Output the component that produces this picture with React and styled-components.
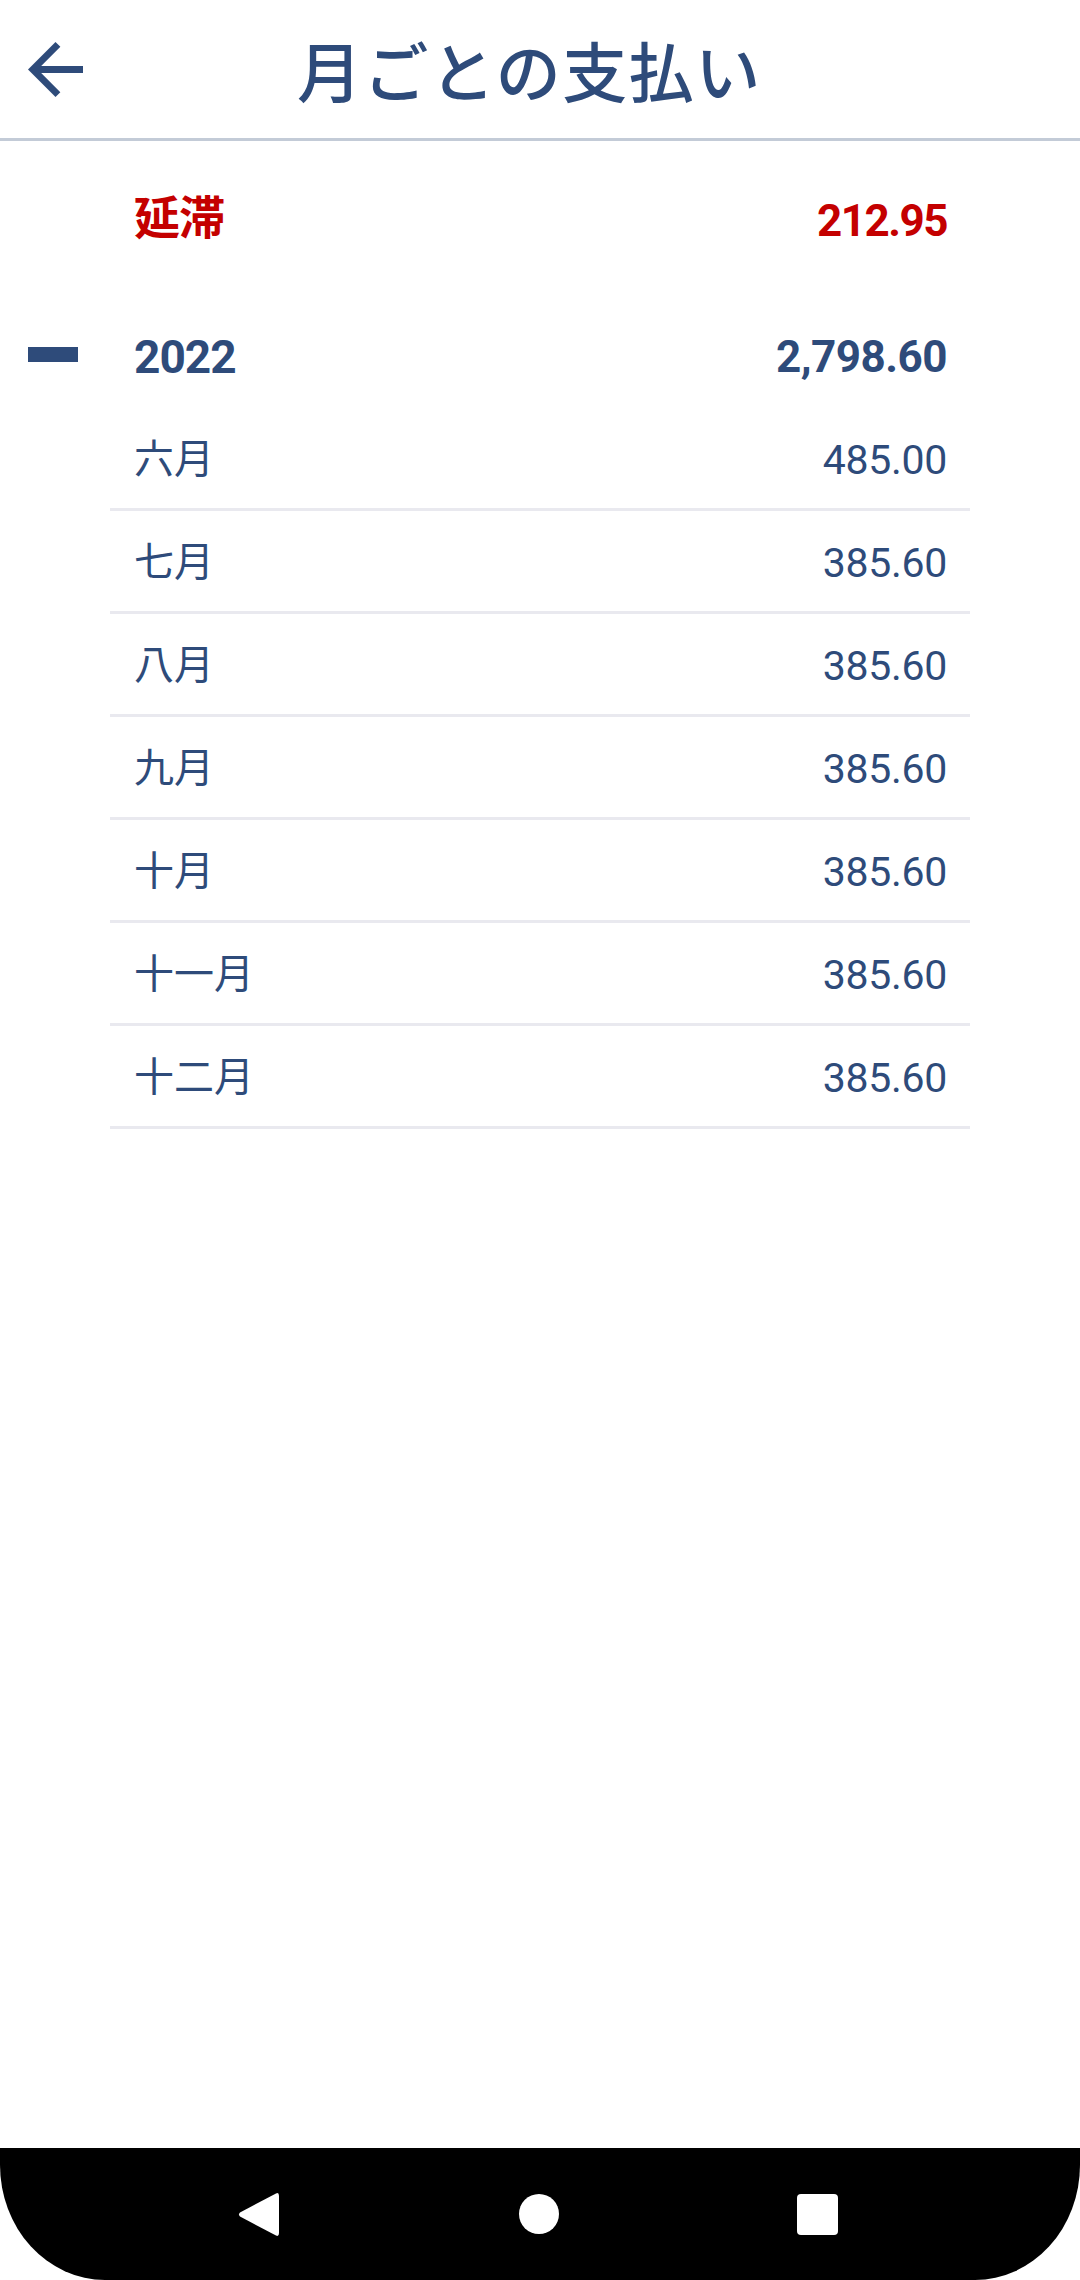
import React from 'react';
import styled, { createGlobalStyle } from 'styled-components';

const Colors = {
  Navy: '#2e4b7a',
  Red: '#c40000',
  HeaderLine: '#c3cbd7',
  RowLine: '#e9e9ef',
};

const payments = [
  { month: '六月', amount: '485.00' },
  { month: '七月', amount: '385.60' },
  { month: '八月', amount: '385.60' },
  { month: '九月', amount: '385.60' },
  { month: '十月', amount: '385.60' },
  { month: '十一月', amount: '385.60' },
  { month: '十二月', amount: '385.60' },
];

const GlobalStyle = createGlobalStyle`
  html, body {
    margin: 0;
    padding: 0;
    background: #fff;
  }
  body {
    font-family: Roboto, "Noto Sans CJK JP", sans-serif;
  }
`;

const BackIcon = () => (
  <svg width="55" height="55" viewBox="4 4 16 16" fill={Colors.Navy}>
    <path d="M20 11H7.83l5.59-5.59L12 4l-8 8 8 8 1.41-1.41L7.83 13H20v-2z" />
  </svg>
);

const App = () => (
  <Page>
    <GlobalStyle />
    <Header>
      <BackButton>
        <BackIcon />
      </BackButton>
      <Title>月ごとの支払い</Title>
    </Header>
    <Content>
      <OverdueRow>
        <Label bold red>延滞</Label>
        <Amount bold red>212.95</Amount>
      </OverdueRow>
      <YearRow>
        <Collapse />
        <Label bold>2022</Label>
        <Amount bold>2,798.60</Amount>
      </YearRow>
      <MonthList>
        {payments.map((p) => (
          <MonthRow key={p.month}>
            <Label>{p.month}</Label>
            <Amount>{p.amount}</Amount>
          </MonthRow>
        ))}
      </MonthList>
    </Content>
    <NavBar>
      <NavBack viewBox="0 0 41 45">
        <path d="M38 1.5 Q41 0 41 4 L41 41 Q41 45 38 43.5 L2 24.5 Q0 22.5 2 20.5 Z" fill="#fff" />
      </NavBack>
      <NavHome />
      <NavRecent />
    </NavBar>
  </Page>
);

const Page = styled.div`
  display: flex;
  flex-direction: column;
  min-height: 2280px;
  width: 1080px;
`;

const Header = styled.header`
  display: flex;
  align-items: center;
  height: 138px;
  border-bottom: 3px solid ${Colors.HeaderLine};
`;

const BackButton = styled.div`
  display: flex;
  align-items: center;
  padding-left: 28px;
  width: 55px;
  height: 55px;
`;

const Title = styled.h1`
  margin: 0 0 0 214px;
  font-family: "Noto Sans CJK JP", sans-serif;
  font-size: 65px;
  font-weight: 500;
  color: ${Colors.Navy};
  letter-spacing: 1.5px;
  line-height: 1;
`;

const Content = styled.main`
  flex: 1;
  display: flex;
  flex-direction: column;
  padding-top: 28px;
`;

const Row = styled.div`
  position: relative;
  display: flex;
  align-items: center;
  justify-content: space-between;
  margin: 0 110px;
  padding: 0 23px 0 24px;
  height: 103px;
  box-sizing: border-box;
`;

const OverdueRow = styled(Row)`
  margin-bottom: 33px;
`;

const YearRow = styled(Row)``;

const Collapse = styled.span`
  position: absolute;
  left: -82px;
  top: 42px;
  width: 50px;
  height: 15px;
  background: ${Colors.Navy};
`;

const MonthList = styled.div`
  display: flex;
  flex-direction: column;
`;

const MonthRow = styled(Row)`
  border-bottom: 3px solid ${Colors.RowLine};
`;

const Label = styled.span`
  font-family: Roboto, "Noto Sans CJK JP", sans-serif;
  font-size: ${(p) => (p.bold ? '46px' : '40px')};
  font-weight: ${(p) => (p.bold ? 700 : 400)};
  letter-spacing: ${(p) => (p.bold ? '-1px' : '0')};
  color: ${(p) => (p.red ? Colors.Red : Colors.Navy)};
  line-height: 1;
  margin-top: ${(p) => (p.red ? '-6px' : p.bold ? '0' : '4px')};
`;

const Amount = styled.span`
  font-family: Roboto, sans-serif;
  font-size: ${(p) => (p.bold ? '44px' : '41px')};
  font-weight: ${(p) => (p.bold ? 700 : 400)};
  letter-spacing: ${(p) => (p.bold ? (p.red ? '-1.5px' : '-0.5px') : '-0.3px')};
  color: ${(p) => (p.red ? Colors.Red : Colors.Navy)};
  line-height: 1;
  margin-top: ${(p) => (p.bold ? '0' : '5px')};
`;

const NavBar = styled.nav`
  display: flex;
  align-items: center;
  height: 132px;
  background: #000;
  border-radius: 0 0 105px 105px / 0 0 115px 115px;
  position: relative;
`;

const NavBack = styled.svg`
  position: absolute;
  left: 238px;
  top: 44px;
  width: 41px;
  height: 45px;
`;

const NavHome = styled.span`
  position: absolute;
  left: 519px;
  top: 46px;
  width: 40px;
  height: 40px;
  border-radius: 50%;
  background: #fff;
`;

const NavRecent = styled.span`
  position: absolute;
  left: 797px;
  top: 46px;
  width: 41px;
  height: 41px;
  border-radius: 4px;
  background: #fff;
`;

export default App;
